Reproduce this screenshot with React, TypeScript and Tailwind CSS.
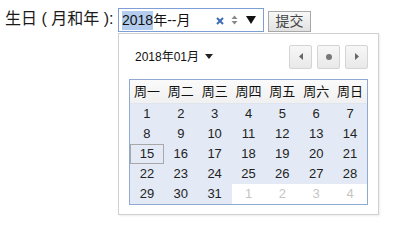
const FONT = '"Liberation Sans", "Noto Sans CJK SC", sans-serif';

const WEEK = ["周一", "周二", "周三", "周四", "周五", "周六", "周日"];

type Day = { n: number; other?: boolean; today?: boolean };

const buildDays = (): Day[] => {
  const days: Day[] = [];
  for (let i = 1; i <= 31; i++) days.push({ n: i, today: i === 15 });
  for (let i = 1; i <= 4; i++) days.push({ n: i, other: true });
  return days;
};

const NavButton = ({ children }: { children: React.ReactNode }) => (
  <div className="flex h-[24px] w-[23px] items-center justify-center rounded-[2px] border border-[#d4d4d4] bg-gradient-to-b from-[#f7f7f7] to-[#e9e9e9]">
    {children}
  </div>
);

const Calendar = () => {
  const days = buildDays();
  return (
    <div className="absolute left-[118px] top-[33px] h-[182px] w-[261px] border border-[#d0d0d0] bg-white pl-[10px] pr-[10px] pt-[10px] shadow-[1px_1px_2px_rgba(0,0,0,0.08)]">
      <div className="flex h-[25px] items-center justify-between">
        <div className="flex items-center pl-[6px] text-[12px] text-[#111]">
          <span>2018年01月</span>
          <svg width="8" height="5" viewBox="0 0 8 5" className="ml-[6px]">
            <path d="M0 0h8L4 5z" fill="#222" />
          </svg>
        </div>
        <div className="flex gap-[5px]">
          <NavButton>
            <svg width="4" height="7" viewBox="0 0 4 7">
              <path d="M4 0v7L0 3.5z" fill="#666" />
            </svg>
          </NavButton>
          <NavButton>
            <span className="block h-[6px] w-[6px] rounded-full bg-[#777]" />
          </NavButton>
          <NavButton>
            <svg width="4" height="7" viewBox="0 0 4 7">
              <path d="M0 0v7l4-3.5z" fill="#666" />
            </svg>
          </NavButton>
        </div>
      </div>
      <div className="mt-[10px] w-[239px] border border-[#8fa9d1]">
        <div className="grid h-[24px] grid-cols-7 border-b border-[#dfe5ee] bg-gradient-to-b from-[#fbfbfb] to-[#f0f0f0] text-[13px] text-[#111]">
          {WEEK.map((w) => (
            <div key={w} className="flex items-center justify-center">
              {w}
            </div>
          ))}
        </div>
        <div className="grid grid-cols-7 bg-[#e3eaf5] text-[13px]">
          {days.map((d, i) => (
            <div
              key={i}
              className={
                d.other
                  ? "flex h-[20px] items-center justify-center bg-white text-[#c4c4c4]"
                  : d.today
                    ? "flex h-[20px] items-center justify-center border border-[#a8a8a8] text-[#222]"
                    : "flex h-[20px] items-center justify-center text-[#222]"
              }
            >
              {d.n}
            </div>
          ))}
        </div>
      </div>
    </div>
  );
};

export default function App() {
  return (
    <div className="relative h-[220px] w-[394px] overflow-hidden bg-white" style={{ fontFamily: FONT }}>
      <div className="flex items-end pl-[5px] pt-[8px]">
        <span className="mb-[3px] w-[113px] text-[16px] leading-[20px] text-[#1a1a1a]">生日 ( 月和年 ):</span>
        <div className="flex h-[24px] w-[146px] items-center border border-[#7d9fd6] bg-white pl-[3px] pr-[7px] text-[14px] text-[#111]">
          <span className="bg-[#b4cdee] leading-[19px]">2018</span>
          <span>年--月</span>
          <svg width="8" height="8" viewBox="0 0 8 8" className="ml-auto mt-[2px]">
            <path d="M1 1l6 6M7 1L1 7" stroke="#3d6cb5" strokeWidth="2" />
          </svg>
          <svg width="7" height="12" viewBox="0 0 7 12" className="ml-[7px]">
            <path d="M0.5 5L3.5 1.5 6.5 5z" fill="#888" />
            <path d="M0.5 7l3 3.5L6.5 7z" fill="#888" />
          </svg>
          <svg width="10" height="8" viewBox="0 0 10 8" className="ml-[8px]">
            <path d="M0 0h10L5 8z" fill="#111" />
          </svg>
        </div>
        <div className="ml-[4px] flex h-[21px] w-[43px] items-center justify-center border border-[#a8a8a8] bg-gradient-to-b from-[#f8f8f8] to-[#e2e2e2] text-[14px] text-[#444]">
          提交
        </div>
      </div>
      <Calendar />
    </div>
  );
}
